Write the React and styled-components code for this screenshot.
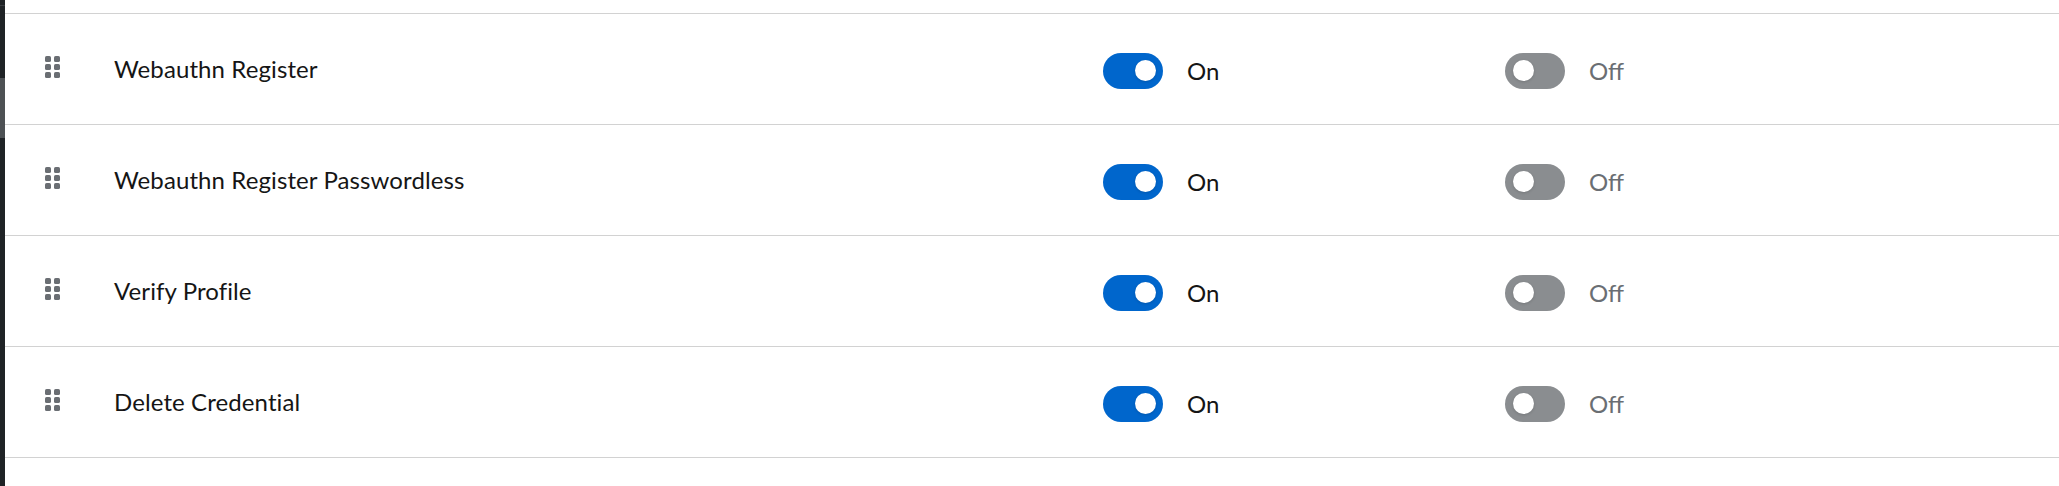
import React from "react";
import styled, { createGlobalStyle } from "styled-components";

const GlobalStyle = createGlobalStyle`
  html, body {
    margin: 0;
    padding: 0;
    background: #ffffff;
    overflow: hidden;
  }
  body {
    font-family: Lato, "Open Sans", "Liberation Sans", sans-serif;
  }
`;

const Page = styled.div`
  display: flex;
  width: 2059px;
  height: 486px;
  background: #ffffff;
`;

const Rail = styled.div`
  width: 5px;
  flex: none;
  display: flex;
  flex-direction: column;
  background: #1f2326;
`;

const RailGap = styled.div`
  height: ${(p) => p.$h}px;
  flex: none;
`;

const RailMark = styled.div`
  height: ${(p) => p.$h}px;
  flex: none;
  background: ${(p) => p.$c};
`;

const Main = styled.div`
  flex: 1;
  padding-top: 13px;
  display: flex;
  flex-direction: column;
`;

const List = styled.div`
  display: flex;
  flex-direction: column;
  border-top: 1px solid #d2d2d2;
`;

const Row = styled.div`
  display: grid;
  grid-template-columns: 109px 989px 402px 1fr;
  align-items: center;
  height: 110px;
  border-bottom: 1px solid #d2d2d2;
`;

const DragCell = styled.div`
  padding-left: 40px;
  display: flex;
  align-items: center;
  margin-top: -4px;
`;

const NameCell = styled.div`
  font-size: 24px;
  color: #151515;
  margin-top: -2px;
  letter-spacing: 0.1px;
`;

const SwitchCell = styled.label`
  display: flex;
  align-items: center;
  gap: 24px;
  margin-top: 3px;
`;

const Track = styled.span`
  position: relative;
  width: 60px;
  height: 36px;
  border-radius: 18px;
  background: ${(p) => (p.$on ? "#0066cc" : "#8a8d90")};
  flex: none;
`;

const Knob = styled.span`
  position: absolute;
  top: 7.5px;
  left: ${(p) => (p.$on ? "31.5px" : "7.5px")};
  width: 21px;
  height: 21px;
  border-radius: 50%;
  background: #ffffff;
  box-shadow: 0 1px 3px rgba(3, 3, 3, 0.15);
`;

const SwitchLabel = styled.span`
  font-size: 24px;
  color: ${(p) => (p.$on ? "#151515" : "#6a6e73")};
`;

const DragIcon = () => (
  <svg width="16" height="22" viewBox="0 0 16 22" aria-hidden="true">
    {[0, 1, 2].map((r) =>
      [0, 1].map((c) => (
        <rect
          key={`${r}-${c}`}
          x={c * 9}
          y={r * 8}
          width="6"
          height="6"
          rx="1.6"
          fill="#6a6e73"
        />
      ))
    )}
  </svg>
);

const Switch = ({ on }) => (
  <SwitchCell>
    <Track $on={on}>
      <Knob $on={on} />
    </Track>
    <SwitchLabel $on={on}>{on ? "On" : "Off"}</SwitchLabel>
  </SwitchCell>
);

const items = [
  "Webauthn Register",
  "Webauthn Register Passwordless",
  "Verify Profile",
  "Delete Credential",
];

export default function App() {
  return (
    <>
      <GlobalStyle />
      <Page>
        <Rail>
          <RailGap $h={5} />
          <RailMark $h={1} $c="#3a3e41" />
          <RailGap $h={72} />
          <RailMark $h={60} $c="#4d5154" />
        </Rail>
        <Main>
          <List>
            {items.map((name) => (
              <Row key={name}>
                <DragCell>
                  <DragIcon />
                </DragCell>
                <NameCell>{name}</NameCell>
                <Switch on />
                <Switch on={false} />
              </Row>
            ))}
          </List>
        </Main>
      </Page>
    </>
  );
}
